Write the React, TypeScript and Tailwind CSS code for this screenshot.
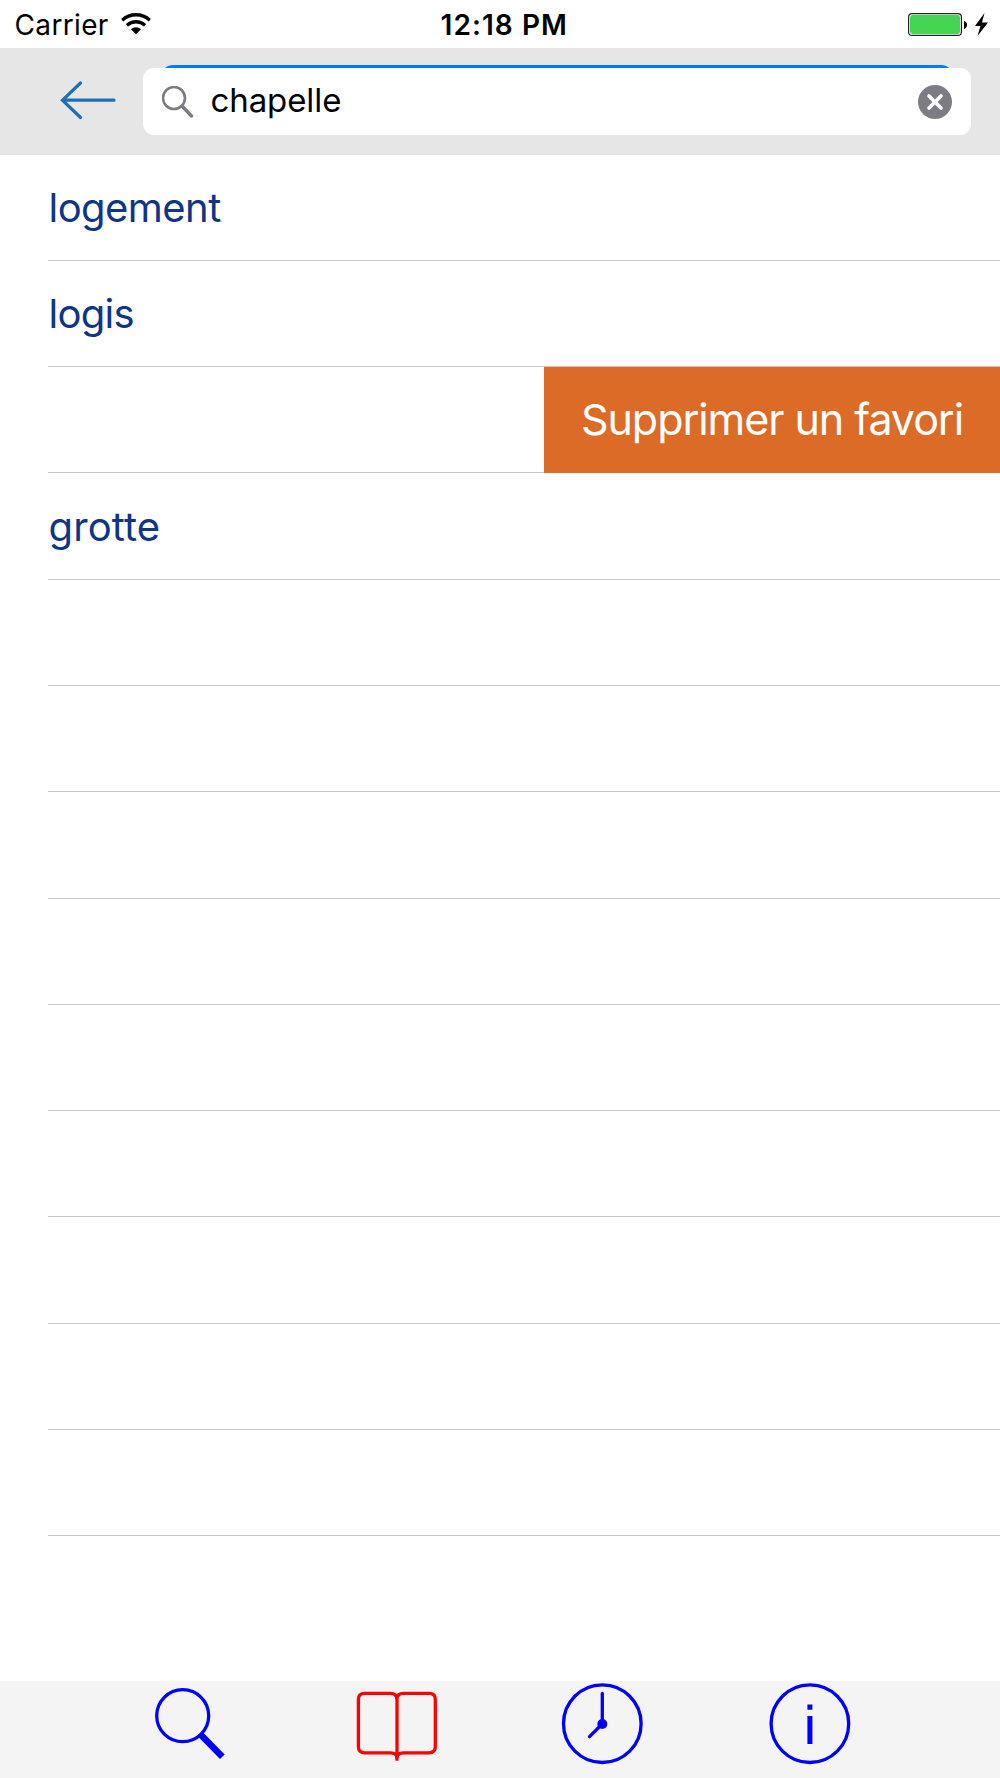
type Row = { label?: string; action?: string; tracking?: string };

const rows: Row[] = [
  { label: 'logement', tracking: 'tracking-[-0.55px]' },
  { label: 'logis', tracking: 'tracking-[-0.7px]' },
  { action: 'Supprimer un favori' },
  { label: 'grotte', tracking: 'tracking-[0.1px]' },
  ...Array.from({ length: 9 }, () => ({})),
];

function StatusBar() {
  return (
    <div className="flex h-12 shrink-0 items-center bg-white text-[28px] leading-[34px] text-black">
      <div className="flex flex-1 items-center pt-[2px] pl-[14.500px]">
        <span className="w-[106.500px] tracking-[0.35px]">Carrier</span>
        <svg className="mb-[2px] h-[22px] w-[30px]" viewBox="0 0 30 22" fill="none" stroke="#000">
          <path d="M1.2 7.2C9 0 21 0 28.8 7.2" strokeWidth="3.4" />
          <path d="M6 12.2C11.2 7.6 18.8 7.6 24 12.2" strokeWidth="3.3" />
          <path d="M10 16.3C13 13.6 17 13.6 20 16.3L15 21.3Z" fill="#000" stroke="none" />
        </svg>
      </div>
      <span className="pt-[2px] pl-[6px] font-semibold tracking-[1.050px]">12:18 PM</span>
      <div className="flex flex-1 items-center justify-end pt-[2px] pr-3">
        <svg className="h-[24px] w-[80px]" viewBox="908 13 80 24">
          <rect x="908.6" y="13.6" width="52.8" height="21.8" rx="3.5" fill="#fff" stroke="#222" strokeWidth="1.2" />
          <rect x="910" y="15" width="50" height="19" rx="2.4" fill="#44d653" />
          <path d="M964 21C968 21.5 968 28.500 964 29Z" fill="#000" />
          <path d="M984.500 13L975 26H980.500L977.500 36L988 22.500H982Z" fill="#000" />
        </svg>
      </div>
    </div>
  );
}

function SearchHeader() {
  return (
    <div className="flex h-[106.500px] shrink-0 bg-[#e6e6e6] pr-[29px]">
      <svg className="mt-[32px] ml-[60px] h-[40px] w-[56px]" viewBox="0 0 56 40" fill="none" stroke="#1f6fb2" strokeWidth="3.200" strokeLinecap="round" strokeLinejoin="miter">
        <path d="M20.500 3L2.500 20.200L20.500 37.500M3 20.200H54" />
      </svg>
      <div className="ml-[27px] flex flex-1 flex-col pt-[17px]">
        <svg className="h-[3px] w-full" viewBox="143 65 828 3" preserveAspectRatio="none">
          <path d="M165 68Q168 65 173 65H941Q946 65 949 68Z" fill="#007aff" />
        </svg>
        <div className="flex h-[67px] items-center rounded-[11px] bg-white pr-[19px] pl-[19px]">
          <svg className="h-[32px] w-[32px]" viewBox="162 86 32 32" fill="none" stroke="#7c7c82">
            <circle cx="174" cy="98" r="11" strokeWidth="2.600" />
            <path d="M182 106L191.500 116" strokeWidth="3.400" strokeLinecap="round" />
          </svg>
          <span className="mb-[4px] ml-[16.500px] text-[33px] leading-10 tracking-[-0.1px] text-black">chapelle</span>
          <svg className="ml-auto h-[34px] w-[34px]" viewBox="0 0 34 34" aria-label="Clear">
            <circle cx="17" cy="17" r="17" fill="#7c7c82" />
            <path d="M11 11L23 23M23 11L11 23" stroke="#fff" strokeWidth="3.600" strokeLinecap="round" />
          </svg>
        </div>
      </div>
    </div>
  );
}

function FavoriteRow({ label, action, tracking = '' }: Row) {
  return (
    <div className="ml-[48px] flex h-[106.300px] items-center border-b border-[#c8c7cc]">
      {label && (
        <span className={`pt-[2px] pl-[0.500px] text-[40px] leading-[48px] text-[#103587] ${tracking}`}>{label}</span>
      )}
      {action && (
        <button className="-mb-px ml-auto flex h-[106.300px] w-[456px] items-center justify-center bg-[#dd6b28] pb-[1px] text-[43px] tracking-[-1.050px] whitespace-nowrap text-white">
          {action}
        </button>
      )}
    </div>
  );
}

function TabBar() {
  return (
    <nav className="flex h-[97px] shrink-0 bg-[#f4f4f4] pl-[154px]">
      <svg className="mt-[6px] h-[74px] w-[74px]" viewBox="154 1687 74 74" fill="none" stroke="#00f">
        <circle cx="182.700" cy="1715.700" r="26" strokeWidth="3.300" />
        <path d="M200.500 1734.500L222.300 1756.700" strokeWidth="6.600" />
      </svg>
      <svg className="mt-[9px] ml-[127px] h-[74px] w-[84px]" viewBox="355 1690 84 74" fill="none" stroke="#f00" strokeWidth="3.300" strokeLinejoin="round">
        <path d="M397 1757V1699Q396.500 1693.400 390.500 1693.400H364.500Q358.400 1693.400 358.400 1699.500V1746.500Q358.400 1752.800 364.500 1752.800H390.500Q396.500 1752.800 396.900 1757.500Q397.300 1752.800 403.500 1752.800H429Q435.300 1752.800 435.300 1746.500V1699.500Q435.300 1693.400 429 1693.400H403.500Q397 1693.400 397 1699" />
        <path d="M396.900 1755V1760.700" />
      </svg>
      <svg className="mt-[2px] ml-[122px] h-[84px] w-[84px]" viewBox="561 1683 84 84" fill="none" stroke="#00f" strokeWidth="3.300">
        <circle cx="602.300" cy="1723.700" r="38.800" />
        <path d="M602.300 1693.500V1724L589.500 1736.700" strokeLinecap="round" strokeLinejoin="round" />
        <circle cx="602.300" cy="1724" r="5" fill="#00f" stroke="none" />
      </svg>
      <svg className="mt-[2px] ml-[123px] h-[84px] w-[84px]" viewBox="768 1683 84 84" fill="none" stroke="#00f">
        <circle cx="809.900" cy="1723.700" r="38.800" strokeWidth="3.300" />
        <path d="M809.900 1704.400V1709.800M809.900 1716V1744" strokeWidth="5" />
      </svg>
    </nav>
  );
}

export default function App() {
  return (
    <main className="flex h-[1778px] w-[1000px] flex-col overflow-hidden bg-white font-['Inter',sans-serif]">
      <StatusBar />
      <SearchHeader />
      <div className="flex-1">
        {rows.map((row, i) => (
          <FavoriteRow key={i} {...row} />
        ))}
      </div>
      <TabBar />
    </main>
  );
}
